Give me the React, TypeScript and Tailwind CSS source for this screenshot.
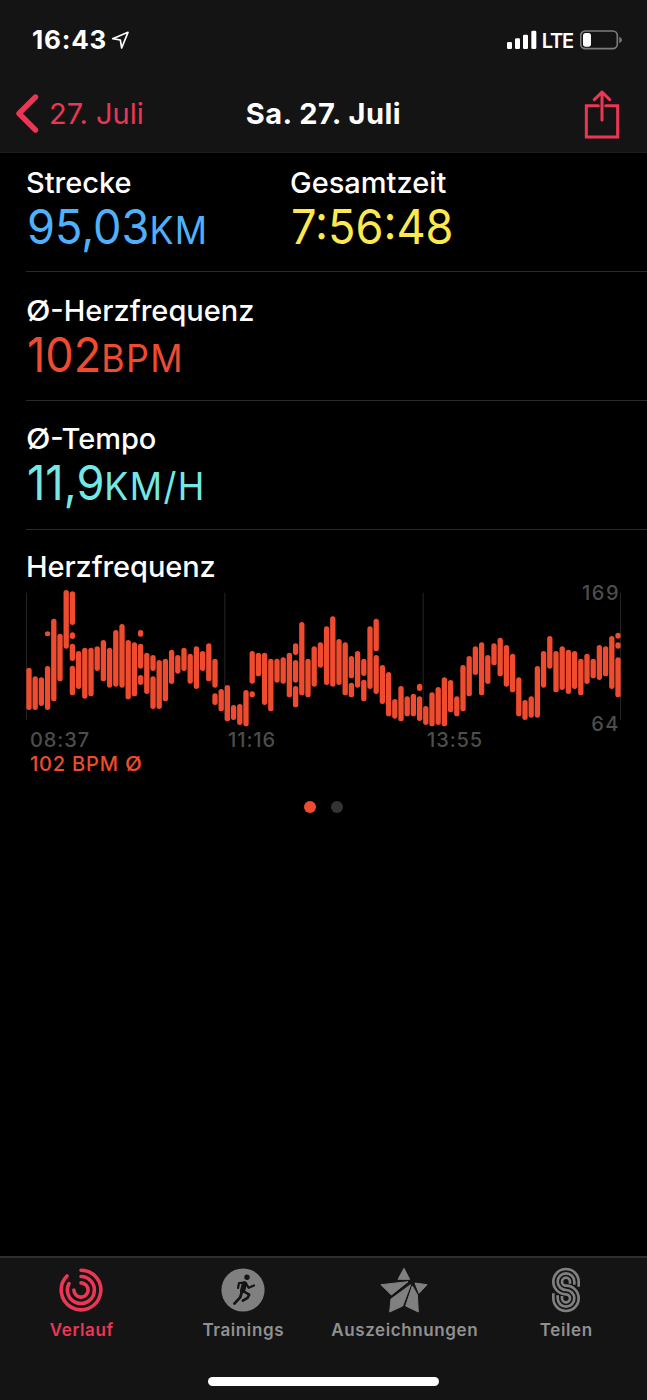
import type { ReactNode } from 'react';

// Each entry is one column, made of [top, bottom] segments in plot units
const heartRate: number[][][] = [
  [[263, 390]], [[289, 390]], [[292, 378]], [[154, 169], [258, 390]], [[116, 364]], [[161, 304]],
  [[30, 206]], [[34, 135], [157, 177], [191, 243], [257, 346]], [[213, 327]], [[203, 356]],
  [[203, 349]], [[199, 273]], [[180, 304]], [[203, 323]], [[150, 320]], [[132, 323]],
  [[180, 358]], [[187, 349]], [[150, 170], [191, 266], [285, 315]], [[218, 342]],
  [[225, 273], [289, 387]], [[240, 387]], [[236, 364]], [[209, 312]], [[225, 281]], [[203, 273]],
  [[221, 311]], [[199, 327]], [[213, 273]], [[190, 304]], [[236, 323], [340, 375]], [[327, 394]],
  [[315, 424]], [[375, 420]], [[372, 435]], [[330, 439]], [[213, 311], [334, 352]], [[218, 289]],
  [[218, 375]], [[236, 394]], [[236, 308]], [[232, 311]], [[218, 352]],
  [[190, 225], [240, 308], [318, 382]], [[126, 346]], [[236, 352]], [[199, 320]], [[187, 263]],
  [[139, 315]], [[109, 320]], [[177, 315]], [[187, 346]], [[228, 295], [308, 352]], [[213, 323]],
  [[236, 288], [299, 364]], [[139, 327]], [[116, 214], [225, 342]], [[255, 372]], [[276, 409]],
  [[357, 416]], [[318, 424]], [[349, 409]], [[341, 409]], [[311, 333], [349, 423]], [[378, 435]],
  [[337, 439]], [[321, 435]], [[292, 439]], [[300, 397]], [[349, 409]], [[255, 394]], [[228, 349]],
  [[199, 285]], [[187, 346]], [[225, 312]], [[190, 256]], [[173, 289]], [[195, 320]], [[221, 337]],
  [[292, 409]], [[360, 420]], [[349, 413]], [[258, 413]], [[213, 323]], [[168, 266]], [[213, 337]],
  [[199, 330]], [[209, 342]], [[213, 327]], [[236, 346]], [[221, 312]], [[236, 295]], [[195, 300]],
  [[199, 289]], [[168, 327]], [[158, 176], [187, 206], [232, 352]],
];

function StatusBar() {
  return (
    <div className="flex h-[76px] items-start justify-between pt-[24px] pr-[25px] pl-[32px]">
      <div className="flex items-start">
        <span className="text-[26px] leading-[32px] font-bold tracking-[0.8px]">16:43</span>
        <svg className="mt-[6px] ml-[4px]" width="20" height="20" viewBox="0 0 60 60" fill="none">
          <path d="M5 26 L51 7 L32 54 L28 30 Z" stroke="white" strokeWidth="5" strokeLinejoin="round" />
        </svg>
      </div>
      <div className="flex items-start">
        <svg className="mt-[6px]" width="30" height="20" viewBox="0 0 90 60" fill="white">
          <rect x="0" y="36" width="15" height="21" rx="4" />
          <rect x="24" y="25" width="15" height="32" rx="4" />
          <rect x="48" y="14" width="15" height="43" rx="4" />
          <rect x="73" y="2" width="15" height="55" rx="4" />
        </svg>
        <span className="ml-[5px] text-[20px] leading-[34px] font-semibold tracking-[-1.2px]">LTE</span>
        <svg className="mt-[6px] ml-[7px]" width="42" height="20" viewBox="0 0 126 60">
          <rect x="2" y="3" width="110" height="53" rx="14" fill="none" stroke="#7c7c7c" strokeWidth="5" />
          <rect x="9" y="9" width="24" height="41" rx="8" fill="white" />
          <path d="M118 20 Q126 24 126 30 Q126 36 118 40 Z" fill="#7c7c7c" />
        </svg>
      </div>
    </div>
  );
}

function NavBar() {
  return (
    <div className="grid h-[76px] grid-cols-[1fr_auto_1fr] items-start px-[15px]">
      <div className="flex items-start text-[#eb3656]">
        <svg className="mt-[17px]" width="24" height="40" viewBox="0 0 24 40" fill="none">
          <path d="M20.5 4 L4 20.5 L20.5 37" stroke="currentColor" strokeWidth="5.4" strokeLinecap="round" strokeLinejoin="round" />
        </svg>
        <span className="mt-[20px] ml-[10px] text-[29px] leading-[36px]">27. Juli</span>
      </div>
      <h1 className="mt-[20px] text-[29px] leading-[36px] font-bold tracking-[0.5px]">Sa. 27. Juli</h1>
      <svg className="mt-[14px] mr-[12px] justify-self-end" width="36" height="50" viewBox="0 0 108 150" fill="none" stroke="#eb3656" strokeWidth="9">
        <path d="M43 47 H7 V141 H101 V47 H65" strokeLinecap="round" />
        <path d="M54 6 V90 M31 29 L54 6 L77 29" strokeLinecap="round" strokeLinejoin="round" />
      </svg>
    </div>
  );
}

interface StatProps {
  label: ReactNode;
  value: string;
  unit?: string;
  color: string;
}

function Stat({ label, value, unit, color }: StatProps) {
  return (
    <div>
      <p className="text-[29px] leading-[36px] font-medium">{label}</p>
      <p className={`mt-px ml-px origin-left scale-x-[0.94] text-[48px] leading-[50px] whitespace-nowrap ${color}`}>
        {value}
        {unit && <span className="text-[38px] leading-[38px] tracking-[1.5px]">{unit}</span>}
      </p>
    </div>
  );
}

// The average sign is set a little wider than the letters after it
function Average() {
  return <span className="mr-[2px] inline-block origin-left scale-x-110">Ø</span>;
}

function HeartRateChart() {
  return (
    <div className="relative h-[196px]">
      <svg className="block" width="596" height="139" viewBox="0 27 1788 417">
        {[0, 595, 1190, 1782].map((x) => (
          <rect key={x} x={x} y="38" width="3" height="382" fill="#242424" />
        ))}
        {heartRate.map((column, i) =>
          column.map(([top, bottom]) => (
            <rect key={`${i}-${top}`} x={1 + i * 18.6} y={top} width="16" height={bottom - top} rx="8" fill="#ee4b2f" />
          ))
        )}
      </svg>
      <div className="absolute top-[-9px] right-[27px] text-[20px] leading-[26px] font-medium tracking-[1.5px] text-[#4d4d4d]">169</div>
      <div className="absolute top-[122px] right-[27px] text-[20px] leading-[26px] font-medium tracking-[1.5px] text-[#4d4d4d]">64</div>
      <div className="grid grid-cols-[198px_199px_1fr] pl-[4px] text-[20px] leading-[24px] font-medium tracking-[0.9px] text-[#4d4d4d]">
        <span>08:37</span>
        <span>11:16</span>
        <span>13:55</span>
      </div>
      <p className="pl-[4px] text-[20px] leading-[24px] font-medium tracking-[0.8px] text-[#ee4b2f]">
        102 BPM <Average />
      </p>
    </div>
  );
}

function RingsIcon() {
  return (
    <svg width="44" height="44" viewBox="0 0 44 44" fill="none" stroke="currentColor" strokeWidth="3.6" strokeLinecap="round">
      <path d="M22 2.2 A19.8 19.8 0 1 1 8 8" />
      <path d="M22 8.5 A13.5 13.5 0 1 1 10 15.6" />
      <path d="M22 14.9 A7.1 7.1 0 1 1 14.9 22" />
    </svg>
  );
}

function RunnerIcon() {
  return (
    <svg width="44" height="44" viewBox="0 0 44 44" fill="none" stroke="#141414" strokeLinecap="round" strokeLinejoin="round">
      <circle cx="22" cy="22" r="21.6" fill="#808080" stroke="none" />
      <circle cx="26" cy="9.2" r="2.7" fill="#141414" stroke="none" />
      <path d="M23.4 15.8 L21.6 22.6" strokeWidth="5.2" />
      <path d="M23 14.6 L18 15.2 L17 20" strokeWidth="2.2" />
      <path d="M25 15.4 L27.6 19.8 L33 17.4" strokeWidth="2.2" />
      <path d="M21 23.5 L19.2 29.4 L13.4 35.6" strokeWidth="2.8" />
      <path d="M22 23 L28.2 26.6 L26.6 29.8 L21.8 32.6" strokeWidth="2.6" />
    </svg>
  );
}

function StarIcon() {
  return (
    <svg width="48" height="46" viewBox="181 51 144 138" fill="#808080" stroke="#808080" strokeWidth="3" strokeLinejoin="round">
      <path d="M253 55 L270 88 L235 88 Z" />
      <path d="M184 104 L265 95 L215 135 Z" />
      <path d="M273 104 L249 168 L210 186 L214 147 Z" />
      <path d="M278 108 L293 134 L296 186 L258 168 Z" />
      <path d="M286 99 L322 104 L298 130 Z" />
    </svg>
  );
}

function SharingIcon() {
  return (
    <svg width="30" height="46" viewBox="692 49 90 138" fill="none" stroke="#808080" strokeWidth="8">
      <path d="M775 108 V93 A38 38 0 1 0 737 131 A12 12 0 1 1 725 143 V136" />
      <path d="M762 102 V93 A25 25 0 1 0 737 118 A25 25 0 1 1 712 143 V134" />
      <path d="M749 99 V93 A12 12 0 1 0 737 105 A38 38 0 1 1 699 143 V128" />
    </svg>
  );
}

function Tab({ label, active, children }: { label: string; active?: boolean; children: ReactNode }) {
  return (
    <div className={`flex flex-col items-center ${active ? 'text-[#eb3656]' : 'text-[#909090]'}`}>
      <div className="flex h-[46px] items-center">{children}</div>
      <span className="mt-[5px] pl-px text-[17px] leading-[24px] font-semibold tracking-[0.6px]">{label}</span>
    </div>
  );
}

export default function App() {
  return (
    <div className="flex h-[1400px] w-[647px] flex-col overflow-hidden bg-black font-['Inter',sans-serif] text-white">
      <header className="h-[153px] border-b border-[#1d1d1d] bg-[#141414]">
        <StatusBar />
        <NavBar />
      </header>

      <main className="flex-1 pl-[26px]">
        <section className="grid h-[119px] grid-cols-[264px_1fr] border-b border-[#2a2a2a] pt-[12px]">
          <Stat label="Strecke" value="95,03" unit="KM" color="text-[#4fb0fb]" />
          <Stat label="Gesamtzeit" value="7:56:48" color="text-[#fce94f]" />
        </section>
        <section className="h-[129px] border-b border-[#2a2a2a] pt-[21px]">
          <Stat label={<><Average />-Herzfrequenz</>} value="102" unit="BPM" color="text-[#ee4b2f]" />
        </section>
        <section className="h-[129px] border-b border-[#2a2a2a] pt-[20px]">
          <Stat label={<><Average />-Tempo</>} value="11,9" unit="KM/H" color="text-[#74e8e4]" />
        </section>
        <section className="pt-[19px]">
          <h2 className="mb-[4px] text-[29px] leading-[36px] font-medium tracking-[-0.1px]">Herzfrequenz</h2>
          <HeartRateChart />
        </section>
        <div className="mt-[16px] mr-[26px] flex justify-center gap-[15px]">
          <span className="size-[12px] rounded-full bg-[#ee4b2f]" />
          <span className="size-[12px] rounded-full bg-[#333333]" />
        </div>
      </main>

      <footer className="h-[144px] border-t-2 border-[#2e2e2e] bg-[#141414] pt-[9px]">
        <nav className="grid grid-cols-[repeat(4,161.5px)] pl-[0.5px]">
          <Tab label="Verlauf" active><RingsIcon /></Tab>
          <Tab label="Trainings"><RunnerIcon /></Tab>
          <Tab label="Auszeichnungen"><StarIcon /></Tab>
          <Tab label="Teilen"><SharingIcon /></Tab>
        </nav>
        <div className="mx-auto mt-[35px] h-[9px] w-[231px] rounded-full bg-white" />
      </footer>
    </div>
  );
}
